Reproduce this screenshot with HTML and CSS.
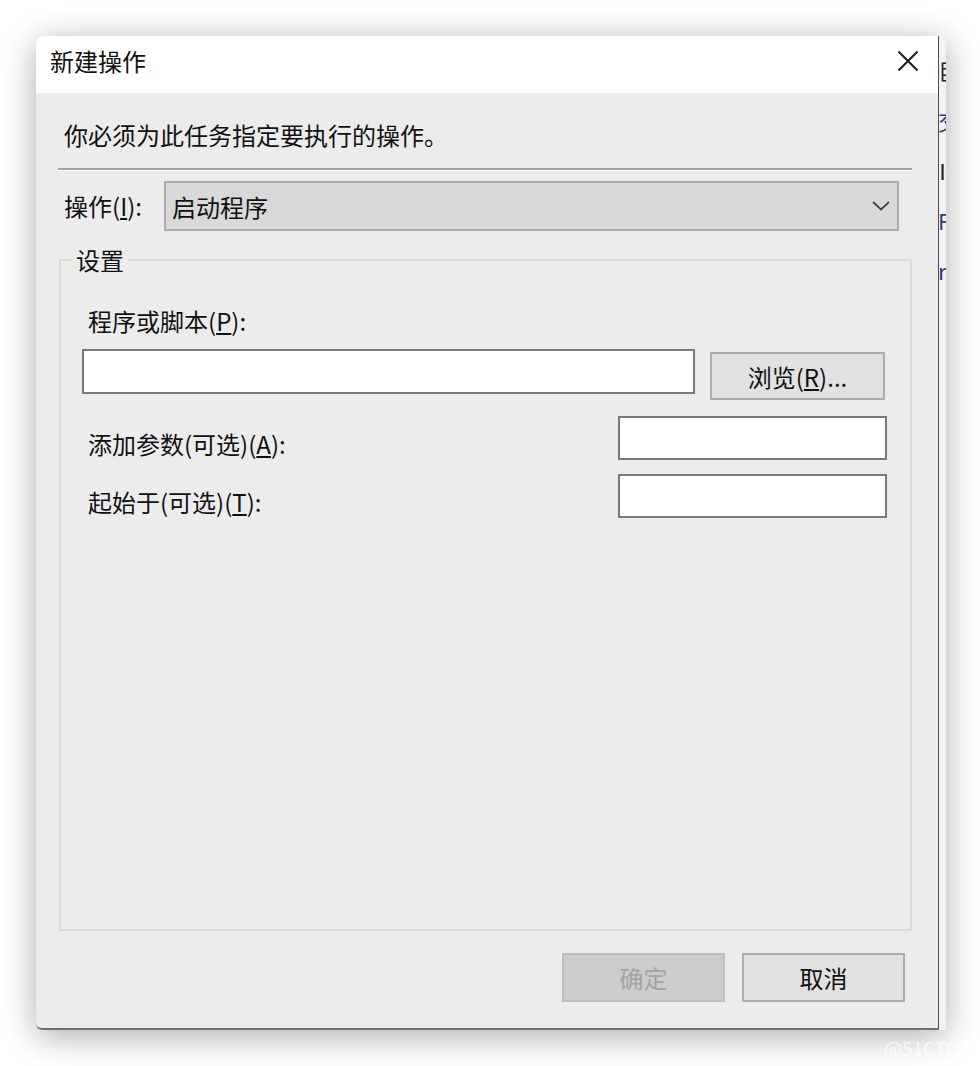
FILE: index.html
```html
<!DOCTYPE html>
<html lang="zh-CN">
<head>
<meta charset="utf-8">
<title>新建操作</title>
<link rel="stylesheet" href="styles.css">
</head>
<body>
<div class="stage">
  <div class="window">
    <div class="dialog">
      <div class="titlebar">
        <span class="title">新建操作</span>
        <span class="close"><svg width="22" height="22" viewBox="0 0 22 22"><path d="M1.5 1.5 L20.5 20.5 M20.5 1.5 L1.5 20.5" stroke="#1a1a1a" stroke-width="2" fill="none"/></svg></span>
      </div>
      <div class="content">
        <p class="desc">你必须为此任务指定要执行的操作。</p>
        <div class="sep"></div>
        <div class="op-row">
          <span class="op-label">操作(<u>I</u>):</span>
          <div class="combo">
            <span>启动程序</span>
            <svg width="18" height="10" viewBox="0 0 18 10"><path d="M1 1 L9 8.5 L17 1" stroke="#444" stroke-width="1.8" fill="none"/></svg>
          </div>
        </div>
        <fieldset class="group">
          <legend>设置</legend>
          <div class="group-body">
            <div class="field-label">程序或脚本(<u>P</u>):</div>
            <div class="prog-row">
              <div class="input wide"></div>
              <div class="btn browse">浏览(<u>R</u>)...</div>
            </div>
            <div class="opt-row first">
              <span class="opt-label">添加参数(可选)(<u>A</u>):</span>
              <div class="input short"></div>
            </div>
            <div class="opt-row">
              <span class="opt-label">起始于(可选)(<u>T</u>):</span>
              <div class="input short"></div>
            </div>
          </div>
        </fieldset>
      </div>
      <div class="footer">
        <div class="btn ok">确定</div>
        <div class="btn cancel">取消</div>
      </div>
    </div>
    <div class="behind">
      <span>巨</span>
      <span class="blue">交</span>
      <span>Ⅲ</span>
      <span class="blue">F</span>
      <span class="blue">r</span>
    </div>
  </div>
  <div class="watermark">@51CTO博客</div>
</div>
</body>
</html>
```
FILE: styles.css
```css
html, body {
  margin: 0;
  padding: 0;
  background: #ffffff;
}
body {
  font-family: "Noto Sans CJK SC", "Microsoft YaHei", sans-serif;
  color: #111;
  width: 980px;
  height: 1066px;
  overflow: hidden;
}
.stage {
  position: relative;
  width: 980px;
  height: 1066px;
  padding-top: 36px;
  box-sizing: border-box;
}
.window {
  display: flex;
  width: fit-content;
  margin-left: 36px;
  border-radius: 8px 0 0 6px;
  box-shadow: 0 6px 34px rgba(0, 0, 0, 0.33);
}
.dialog {
  width: 903px;
  height: 994px;
  box-sizing: border-box;
  display: flex;
  flex-direction: column;
  background: #ececec;
  border-right: 1px solid #4a4a4a;
  border-bottom: 2px solid #707070;
  border-radius: 8px 0 0 6px;
  overflow: hidden;
}
.titlebar {
  height: 57px;
  flex: none;
  background: #ffffff;
  display: flex;
  align-items: center;
  justify-content: space-between;
  padding-left: 14px;
}
.title {
  font-size: 24px;
  line-height: 30px;
  margin-bottom: 7px;
  color: #111;
}
.close {
  width: 44px;
  height: 30px;
  margin-right: 8px;
  margin-bottom: 7px;
  display: flex;
  align-items: center;
  justify-content: center;
}
.content {
  flex: 1;
  display: flex;
  flex-direction: column;
  min-height: 0;
}
.desc {
  margin: 25px 0 0 28px;
  font-size: 24px;
  line-height: 34px;
}
.sep {
  margin: 16px 26px 0 22px;
  border-top: 2px solid #a2a2a2;
  border-bottom: 1px solid #ffffff;
}
.op-row {
  margin-top: 10px;
  display: flex;
  align-items: center;
  padding-left: 28px;
}
.op-label {
  width: 100px;
  font-size: 24px;
  line-height: 30px;
}
.combo {
  width: 735px;
  height: 50px;
  box-sizing: border-box;
  border: 2px solid #adadad;
  background: #d9d9d9;
  display: flex;
  align-items: center;
  justify-content: space-between;
  padding: 0 7px 0 6px;
  font-size: 24px;
}
.group {
  flex: 1;
  min-width: 0;
  margin: 14px 26px 0 23px;
  padding: 0;
  border: 2px solid #dadada;
}
.group legend {
  margin-left: 11px;
  padding: 0 4px;
  font-size: 24px;
  line-height: 30px;
}
.group-body {
  padding: 31px 23px 0 21px;
}
.field-label {
  margin-left: 6px;
  font-size: 24px;
  line-height: 30px;
}
.prog-row {
  margin-top: 13px;
  display: flex;
  align-items: flex-start;
  gap: 15px;
}
.input {
  box-sizing: border-box;
  background: #ffffff;
  border: 2px solid #7a7a7a;
}
.input.wide {
  width: 613px;
  height: 45px;
}
.input.short {
  width: 269px;
  height: 44px;
}
.btn {
  box-sizing: border-box;
  display: flex;
  align-items: center;
  justify-content: center;
  font-size: 24px;
  border: 2px solid #adadad;
  background: #e1e1e1;
}
.browse {
  width: 175px;
  height: 48px;
  margin-top: 3px;
}
.opt-row {
  margin-top: 14px;
  display: flex;
  align-items: center;
  justify-content: space-between;
}
.opt-row.first {
  margin-top: 16px;
}
.opt-label {
  margin-left: 6px;
  margin-top: 12px;
  font-size: 24px;
  line-height: 30px;
}
.footer {
  flex: none;
  display: flex;
  justify-content: flex-end;
  gap: 17px;
  padding: 22px 33px 26px 0;
}
.footer .btn {
  width: 163px;
  height: 49px;
}
.ok {
  background: #cccccc;
  border-color: #bfbfbf;
  color: #a3a3a3;
}
.cancel {
  color: #111;
}
.behind {
  width: 7px;
  height: 994px;
  overflow: hidden;
  background: #f2f2f2;
  display: flex;
  flex-direction: column;
  padding-top: 9px;
  box-sizing: border-box;
}
.behind span {
  display: block;
  font-size: 22px;
  line-height: 50px;
  margin-left: -1px;
  color: #222;
}
.behind span.blue {
  color: #2a3f78;
}
.watermark {
  position: absolute;
  left: 884px;
  top: 1034px;
  font-size: 19px;
  color: rgba(255, 255, 255, 0.75);
}
```
